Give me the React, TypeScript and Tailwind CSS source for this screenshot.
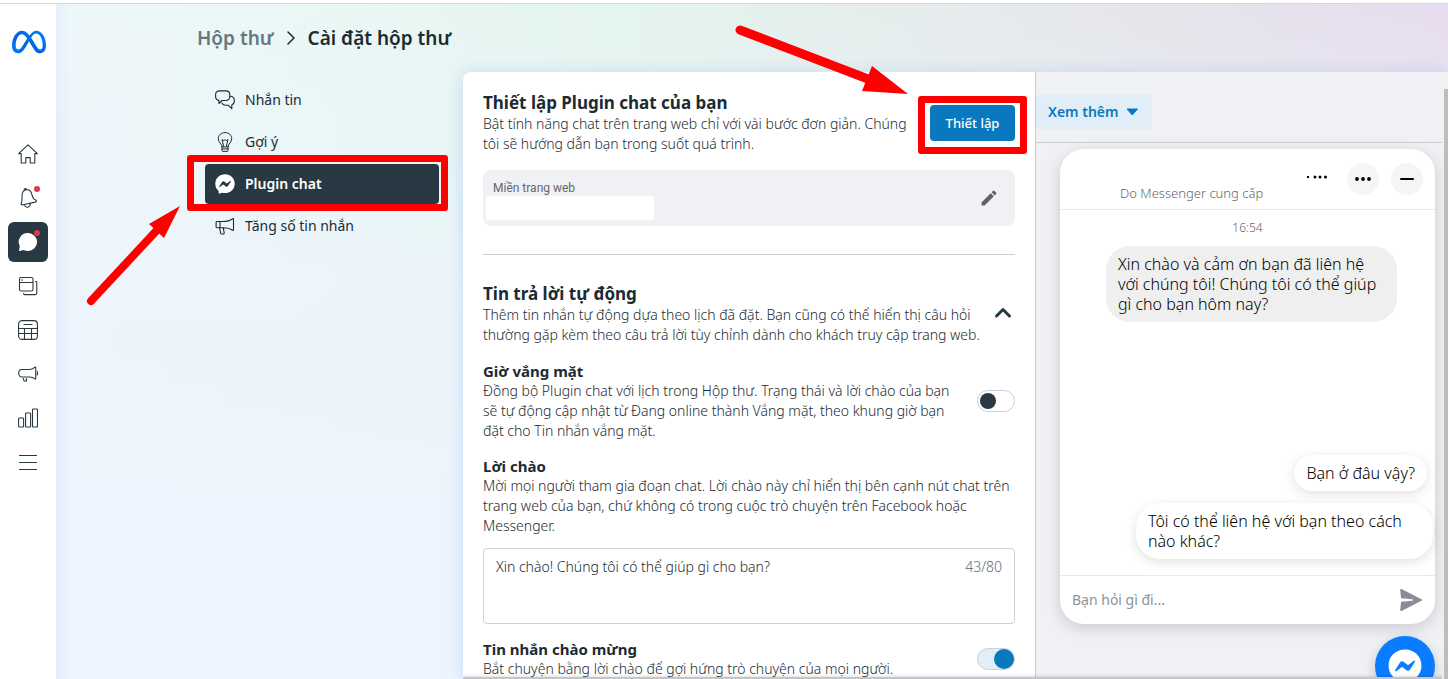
import React from 'react';
import { clsx } from 'clsx';
import { FaFacebookMessenger, FaMeta } from 'react-icons/fa6';
import { MdEdit } from 'react-icons/md';

type IconProps = { className?: string };

const stroke = {
  fill: 'none',
  stroke: 'currentColor',
  strokeLinecap: 'round' as const,
  strokeLinejoin: 'round' as const,
};

const HomeIcon = ({ className }: IconProps) => (
  <svg viewBox="0 0 20 20" className={className} {...stroke} strokeWidth="1.1">
    <path d="M.6 9.6 10 .8l9.4 8.8h-2.6v9.4h-4.600v-5.400H7.800V19H3.200V9.600z" />
  </svg>
);

const BellIcon = ({ className }: IconProps) => (
  <svg viewBox="0 0 20 20" className={className} {...stroke} strokeWidth="1.1">
    <path d="M6.500 2.200C9 .9 12 1.800 13.200 4.500c1 2.400 1 4.700 2.600 6.400 1 1 2.700 1.200 2.700 2.100 0 .7-.5.9-1.200 1.100L4.800 16.800c-.9.200-1.600 0-1.700-.7-.2-1 .7-1.600.8-3 .2-2.200 0-4.200.2-6.400.2-2 .9-3.600 2.400-4.500zM6.200 2.300C5.600.8 8.300-.1 8.700 1.500M6.300 16.700c.6 2 2 2.900 3.700 2.500 1.500-.4 2.400-1.600 2.300-3.700" />
  </svg>
);

const ChatIcon = ({ className }: IconProps) => (
  <svg viewBox="0 0 20 20" className={className} fill="currentColor">
    <path d="M10.100 1a9 9 0 1 1 0 18c-1.700 0-3-.4-4.300-1.100L1.300 19c-.3 0-.4-.2-.3-.5l.8-4.300A9 9 0 0 1 10.100 1z" />
  </svg>
);

const PagesIcon = ({ className }: IconProps) => (
  <svg viewBox="0 0 20 20" className={className} {...stroke} strokeWidth="1.1">
    <rect x="1.500" y="1.500" width="13.500" height="13.500" rx="1.500" />
    <path d="M1.500 6.500H15M3.600 4h1M17.500 5.500h.5c.5 0 .8.3.8.8V17c0 1-.6 1.600-1.600 1.600H6.500c-.5 0-.8-.3-.8-.8v-.6" />
  </svg>
);

const PlannerIcon = ({ className }: IconProps) => (
  <svg viewBox="0 0 20 20" className={className} {...stroke} strokeWidth="1.1">
    <rect x=".6" y=".6" width="18.800" height="18.800" rx="3.500" />
    <path d="M.6 8.500h18.800M.6 13.500h18.800M6.500 8.500v10.800M13.500 8.500v10.800M6 4.500h8" />
  </svg>
);

const AdsIcon = ({ className }: IconProps) => (
  <svg viewBox="0 0 20 20" className={className} {...stroke} strokeWidth="1.1">
    <path d="M4 5.500h7.500c2.600 0 4.200-.8 5.500-2.300.3-.3.700-.1.700.3v11.200c0 .4-.4.500-.7.200-1.300-1.300-3-1.900-5.500-1.900H4C2 13 .7 11.400.7 9.200S2 5.500 4 5.500zM19.400 7.500v3.500M5.300 14.500l.8 2.500h2.400v-2.500" />
  </svg>
);

const InsightsIcon = ({ className }: IconProps) => (
  <svg viewBox="0 0 20 20" className={className} {...stroke} strokeWidth="1.1">
    <rect x=".6" y="10" width="5" height="9" rx=".8" />
    <rect x="7.600" y="5" width="5" height="14" rx=".8" />
    <rect x="14.500" y="1" width="5" height="18" rx=".8" />
  </svg>
);

const MenuIcon = ({ className }: IconProps) => (
  <svg viewBox="0 0 20 20" className={className} stroke="currentColor">
    <path d="M1 3.500h18M1 10.500h18M1 17.500h18" />
  </svg>
);

const MessagesIcon = ({ className }: IconProps) => (
  <svg viewBox="0 0 20 20" className={className} {...stroke} strokeWidth="1.1">
    <path d="M4.500.9h6.300c2.500 0 4 1.500 4 3.800v1.900c0 2.300-1.500 3.900-4 3.900H7.200l-3.200 3v-3.100C1.700 10.100.6 8.700.6 6.600V4.700C.6 2.400 2 .9 4.500.9z" />
    <path d="M14.900 6.200c3 0 4.500 1.500 4.500 4.200 0 2.300-.9 3.800-2.600 4.300v4l-3.600-3.500h-2.500c-1.800 0-3-.7-3.600-2" />
  </svg>
);

const BulbIcon = ({ className }: IconProps) => (
  <svg viewBox="0 0 20 20" className={className} {...stroke}>
    <path d="M7 14.500c0-2.700-3.700-4-3.700-7.600C3.300 3 6.200.6 10 .6S16.700 3 16.700 6.900c0 3.600-3.700 4.900-3.700 7.600zM7 14.500v4c0 .6.4.9 1 .9h4c.6 0 1-.3 1-.9v-4M7 16.900h6M8.700 14.300 7 7.500l1.800 1.300L10 7.500l1.200 1.300L13 7.500l-1.700 6.800" />
  </svg>
);

const HornIcon = ({ className }: IconProps) => (
  <svg viewBox="0 0 20 20" className={className} {...stroke} strokeWidth="1.1">
    <path d="M2 5.500h6c4 0 7.500-1.200 9.600-2.800.4-.3.900-.1.900.4v10.800c0 .5-.5.700-.9.400-2-1.500-5.600-2.600-9.600-2.600H2c-.5 0-.9-.4-.9-.9V6.400c0-.5.400-.9.900-.9zM5 5.500v6.200M4.500 11.700l1.200 5.600c.1.500.5.700 1 .7h1.800c.5 0 .8-.4.700-.9l-1-5.400" />
  </svg>
);

const SendIcon = ({ className }: IconProps) => (
  <svg viewBox="0 0 24 24" className={className} fill="currentColor">
    <path d="M1.200 2C1 1.200 1.700.7 2.500 1l20 10.200c.8.400.8 1.200 0 1.600l-20 10.200c-.8.300-1.500-.2-1.300-1l.9-8.300 11.400-1c.5-.1.500-1.300 0-1.400l-11.400-1z" />
  </svg>
);

const railItems = [
  { icon: HomeIcon, label: 'Trang chủ' },
  { icon: BellIcon, label: 'Thông báo', badge: true },
  { icon: ChatIcon, label: 'Hộp thư', badge: true, active: true },
  { icon: PagesIcon, label: 'Bài viết' },
  { icon: PlannerIcon, label: 'Công cụ lập kế hoạch' },
  { icon: AdsIcon, label: 'Quảng cáo' },
  { icon: InsightsIcon, label: 'Thông tin chi tiết' },
  { icon: MenuIcon, label: 'Tất cả công cụ' },
];

const settingItems = [
  { icon: MessagesIcon, label: 'Nhắn tin' },
  { icon: BulbIcon, label: 'Gợi ý' },
  { icon: FaFacebookMessenger, label: 'Plugin chat', active: true },
  { icon: HornIcon, label: 'Tăng số tin nhắn' },
];

function Rail() {
  return (
    <aside className="flex w-14 shrink-0 flex-col items-center bg-white pt-6">
      <a href="#" aria-label="Meta" className="flex h-[27px] items-center">
        <svg width="0" height="0" className="absolute">
          <linearGradient id="meta-blue" x1="0" y1="1" x2="1" y2="0">
            <stop offset="0" stopColor="#0082fb" />
            <stop offset=".4" stopColor="#0064e0" />
            <stop offset="1" stopColor="#0082fb" />
          </linearGradient>
        </svg>
        <FaMeta className="ml-[2px] h-[28px] w-[34px]" fill="url(#meta-blue)" />
      </a>
      <nav className="mt-[79px] flex flex-col gap-1">
        {railItems.map((item) => (
          <a
            key={item.label}
            href="#"
            aria-label={item.label}
            className={clsx(
              'relative flex size-10 items-center justify-center rounded-md',
              item.active ? 'bg-[#283943] text-white' : 'text-[#283943]'
            )}
          >
            <item.icon className="size-5" />
            {item.badge && <span className="absolute top-2 right-2 size-[6px] rounded-full bg-[#e0374a]" />}
          </a>
        ))}
      </nav>
    </aside>
  );
}

function SettingsNav() {
  return (
    <nav className="flex w-[407px] shrink-0 flex-col gap-[2px] pt-2 pr-6 pl-[149px]">
      {settingItems.map((item) => (
        <a
          key={item.label}
          href="#"
          className={clsx(
            'relative flex h-10 items-center gap-[10px] rounded-[4px] px-[10px] text-sm',
            item.active ? 'bg-[#283943] font-semibold text-white' : 'font-normal text-[#1c2b33]'
          )}
        >
          <item.icon className="size-5" />
          {item.label}
          {item.active && (
            <span className="absolute -top-[9px] -right-[9px] -bottom-[7px] -left-[18px] rounded-[3px] border-7 border-[#ff0000]" />
          )}
        </a>
      ))}
    </nav>
  );
}

function Toggle({ id, on }: { id: string; on?: boolean }) {
  return (
    <input
      id={id}
      type="checkbox"
      defaultChecked={on}
      className="flex h-[22px] w-[38px] shrink-0 appearance-none items-center rounded-full border border-[#cbd2d9] bg-white px-[2px] before:size-4 before:rounded-full before:bg-[#283943] checked:justify-end checked:bg-[#e1edf7] checked:px-0 checked:before:size-5 checked:before:bg-[#0a78be]"
    />
  );
}

function PluginSettings() {
  return (
    <section className="min-w-0 flex-1 rounded-tl-lg border-r border-[#cbcdd2] bg-white px-5 pt-5 text-sm leading-5 font-light text-[#1c2b33]">
      <div className="flex justify-between">
        <div className="w-[430px]">
          <h2 className="text-[17px] leading-[22px] font-bold text-[#1c2b33]">Thiết lập Plugin chat của bạn</h2>
          <p>Bật tính năng chat trên trang web chỉ với vài bước đơn giản. Chúng tôi sẽ hướng dẫn bạn trong suốt quá trình.</p>
        </div>
        <div className="relative mt-[13px] h-9 shrink-0">
          <button className="h-9 w-[85px] rounded-[4px] bg-[#0a78be] text-[13px] font-medium text-white">Thiết lập</button>
          <span className="pointer-events-none absolute -top-[9px] -right-3 -bottom-[13px] -left-3 rounded-[3px] border-7 border-[#ff0000]" />
        </div>
      </div>

      <div className="mt-4 flex h-14 items-center justify-between rounded-lg bg-[#f0f1f5] pr-4 pl-[3px]">
        <div className="flex flex-col pt-1">
          <label htmlFor="domain" className="pl-[7px] font-[Roboto] text-xs font-normal text-[#65676b]">
            Miền trang web
          </label>
          <input id="domain" className="h-6 w-[168px] bg-white px-2 outline-none" />
        </div>
        <button aria-label="Chỉnh sửa">
          <MdEdit className="size-5 text-[#606266]" />
        </button>
      </div>

      <hr className="mt-7 border-[#c5ced6]" />

      <div className="mt-7 flex items-center justify-between">
        <div className="w-[500px]">
          <h2 className="text-[17px] leading-[22px] font-bold text-[#1c2b33]">Tin trả lời tự động</h2>
          <p>Thêm tin nhắn tự động dựa theo lịch đã đặt. Bạn cũng có thể hiển thị câu hỏi thường gặp kèm theo câu trả lời tùy chỉnh dành cho khách truy cập trang web.</p>
        </div>
        <button aria-label="Thu gọn" className="text-[#283943]">
          <svg viewBox="0 0 24 24" className="size-6" {...stroke} strokeWidth="3">
            <path d="m5.500 14 6.500-6.500 6.500 6.500" />
          </svg>
        </button>
      </div>

      <div className="mt-4 flex items-center justify-between">
        <div className="w-[470px]">
          <label htmlFor="away" className="block text-[15px] leading-5 font-bold text-[#1c2b33]">Giờ vắng mặt</label>
          <p>Đồng bộ Plugin chat với lịch trong Hộp thư. Trạng thái và lời chào của bạn sẽ tự động cập nhật từ Đang online thành Vắng mặt, theo khung giờ bạn đặt cho Tin nhắn vắng mặt.</p>
        </div>
        <Toggle id="away" />
      </div>

      <div className="mt-[15px]">
        <label htmlFor="greeting" className="block text-[15px] leading-5 font-bold text-[#1c2b33]">Lời chào</label>
        <p>Mời mọi người tham gia đoạn chat. Lời chào này chỉ hiển thị bên cạnh nút chat trên trang web của bạn, chứ không có trong cuộc trò chuyện trên Facebook hoặc Messenger.</p>
        <div className="mt-3 flex h-[76px] rounded-[4px] border border-[#cbd2d9] px-3 pt-2">
          <textarea
            id="greeting"
            className="h-full flex-1 resize-none outline-none"
            defaultValue="Xin chào! Chúng tôi có thể giúp gì cho bạn?"
          />
          <span className="text-[#5f6b73]">43/80</span>
        </div>
      </div>

      <div className="mt-[15px] flex items-center justify-between">
        <div>
          <label htmlFor="welcome" className="block text-[15px] leading-5 font-bold text-[#1c2b33]">Tin nhắn chào mừng</label>
          <p>Bắt chuyện bằng lời chào để gợi hứng trò chuyện của mọi người.</p>
        </div>
        <Toggle id="welcome" on />
      </div>
    </section>
  );
}

function ChatPreview() {
  return (
    <section className="relative flex w-[412px] shrink-0 flex-col bg-[#f0f1f5]">
      <div className="mr-[6px] flex h-[71px] shrink-0 items-center border-b border-[#cbcdd2] pt-[10px]">
        <button className="flex h-9 w-[116px] items-center justify-between rounded-[4px] bg-[#e1edf7] pr-[14px] pl-3 text-sm font-semibold text-[#0a78be]">
          Xem thêm
          <svg viewBox="0 0 12 8" className="h-2 w-3" fill="currentColor">
            <path d="M1 1h10.500L6.300 7z" stroke="currentColor" strokeLinejoin="round" />
          </svg>
        </button>
      </div>

      <div className="mt-[6px] mr-[13px] ml-6 flex h-[475px] shrink-0 flex-col rounded-3xl bg-white shadow-[0_4px_16px_rgba(0,0,0,0.16)]">
        <header className="flex h-[61px] items-center justify-end gap-3 border-b border-[#e8e8ea] pr-3">
          <span className="mr-auto self-end pb-[6px] pl-15 text-[13px] leading-5 font-light text-[#65676b]">Do Messenger cung cấp</span>
          <svg viewBox="0 0 22 4" className="mr-[7px] mb-1 h-1 w-[22px]">
            <path d="M1 1h2v2H1z" />
            <circle cx="9" cy="2" r="1.500" />
            <circle cx="14" cy="2" r="1.500" />
            <circle cx="19.500" cy="2" r="1.500" />
          </svg>
          <button aria-label="Tùy chọn" className="flex size-8 items-center justify-center rounded-full bg-[#f5f5f5]">
            <svg viewBox="0 0 16 4" className="h-1 w-4">
              <circle cx="2" cy="2" r="1.900" />
              <circle cx="8" cy="2" r="1.900" />
              <circle cx="14" cy="2" r="1.900" />
            </svg>
          </button>
          <button aria-label="Thu nhỏ" className="flex size-8 items-center justify-center rounded-full bg-[#f5f5f5]">
            <span className="h-[2px] w-[14px] rounded-full bg-black" />
          </button>
        </header>

        <div className="flex flex-1 flex-col pt-2 text-base leading-5 font-light text-black">
          <time className="self-center text-xs leading-5 text-[#65676b]">16:54</time>
          <p className="mt-2 ml-[46px] w-[291px] rounded-3xl bg-[#efefef] px-3 py-2">
            Xin chào và cảm ơn bạn đã liên hệ với chúng tôi! Chúng tôi có thể giúp gì cho bạn hôm nay?
          </p>
          <div className="mt-auto mb-4 flex flex-col items-end gap-3">
            <button className="mr-2 rounded-3xl bg-white px-3 py-2 shadow-[0_3px_12px_rgba(0,0,0,0.12)]">Bạn ở đâu vậy?</button>
            <button className="mr-[2px] w-[297px] rounded-3xl bg-white px-3 py-2 text-left shadow-[0_3px_12px_rgba(0,0,0,0.12)]">
              Tôi có thể liên hệ với bạn theo cách nào khác?
            </button>
          </div>
        </div>

        <form className="flex h-[49px] items-center border-t border-[#e8e8ea] px-3">
          <input
            aria-label="Bạn hỏi gì đi"
            placeholder="Bạn hỏi gì đi..."
            className="min-w-0 flex-1 text-sm outline-none placeholder:text-[#8e939b]"
          />
          <button type="button" aria-label="Gửi" className="text-[#8a8d95]">
            <SendIcon className="size-6" />
          </button>
        </form>
      </div>

      <button
        aria-label="Messenger"
        className="mt-3 mr-[13px] flex size-15 shrink-0 items-center justify-center self-end rounded-full bg-[#0a7cff] text-white shadow-[0_4px_12px_rgba(0,0,0,0.2)]"
      >
        <FaFacebookMessenger className="size-[34px]" />
      </button>

      <div className="absolute top-0 right-0 bottom-0 w-1 bg-[#f1f1f1] pt-[17px]">
        <div className="h-full bg-[#bdbdbd]" />
      </div>
    </section>
  );
}

function Arrows() {
  return (
    <svg className="pointer-events-none absolute top-0 left-0" width="920" height="310" fill="#ff0000" stroke="#ff0000">
      <path d="M740 30 868 79" strokeWidth="9" strokeLinecap="round" />
      <path d="m91 301 68-73" strokeWidth="8" strokeLinecap="round" />
      <path d="m908 94-36-28-10 25zM180 206l-31 18 15 14z" stroke="none" />
    </svg>
  );
}

export default function App() {
  return (
    <div className="relative flex h-screen flex-col overflow-hidden bg-white pt-[3px] font-['Noto_Sans',sans-serif]">
      <div className="flex min-h-0 flex-1 border-t border-[#d5d8db]">
        <Rail />
        <div className="flex min-w-0 flex-1 flex-col bg-[linear-gradient(90deg,#e4effc_0%,transparent_16px),linear-gradient(180deg,transparent_0%,#edf4fdb3_45%,#edf4fd_75%),linear-gradient(90deg,#eef8fa_0%,#e9f7f5_20%,#e4f4ee_42%,#e6ebec_65%,#e5e5eb_80%,#e7dcef_100%)]">
          <header className="flex h-[68px] shrink-0 items-center gap-3 pl-[141px] text-[19px] font-semibold text-[#1c2b33]">
            <a href="#" className="text-[#67787f]">Hộp thư</a>
            <svg viewBox="0 0 10 14" className="h-[14px] w-[10px]" {...stroke} strokeWidth="1.500">
              <path d="m2 1 6 6-6 6" />
            </svg>
            <h1>Cài đặt hộp thư</h1>
          </header>
          <main className="flex min-h-0 flex-1">
            <SettingsNav />
            <div className="relative flex min-w-0 flex-1 overflow-hidden rounded-tl-lg shadow-[-2px_0_14px_rgba(120,170,230,0.28)]">
              <PluginSettings />
              <ChatPreview />
              <div className="absolute right-[6px] bottom-0 left-0 h-[2px] bg-[#c3c5c9] shadow-[0_-1px_3px_rgba(0,0,0,0.15)]" />
            </div>
          </main>
        </div>
      </div>
      <Arrows />
    </div>
  );
}
